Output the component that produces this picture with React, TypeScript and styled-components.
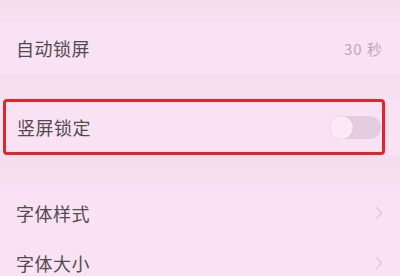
import React from 'react';
import styled, { createGlobalStyle } from 'styled-components';

const GlobalStyle = createGlobalStyle`
  html, body {
    margin: 0;
    padding: 0;
    background: #f9e2f3;
    overflow: hidden;
  }
  body {
    font-family: "Noto Sans CJK SC", "Noto Sans", sans-serif;
  }
`

const Page = styled.div`
  width: 400px;
  height: 276px;
  display: flex;
  flex-direction: column;
  background: #f9e2f3;
  overflow: hidden;
`

const Band = styled.div<{ h: number }>`
  height: ${props => props.h}px;
  flex-shrink: 0;
  background: linear-gradient(180deg, #f4ddec 0%, #f7e0f0 100%);
`

const Row = styled.div<{ h: number }>`
  height: ${props => props.h}px;
  flex-shrink: 0;
  display: flex;
  align-items: center;
  justify-content: space-between;
  padding: 0 17px 0 16px;
  background: #f9e2f3;
`

const Highlight = styled.div`
  height: 56px;
  flex-shrink: 0;
  margin: 0 15px 0 3px;
  box-sizing: border-box;
  border: 3px solid #e4242b;
  border-radius: 4px;
  display: flex;
  align-items: center;
  justify-content: space-between;
  padding: 0 1px 0 11px;
  background: #f9e2f3;
`

const Label = styled.span`
  font-size: 18px;
  color: #524b50;
  letter-spacing: 0.5px;
`

const Value = styled.span`
  font-size: 15px;
  color: #bcaab8;
  letter-spacing: 1px;
`

const Toggle = styled.div`
  width: 51px;
  height: 23px;
  border-radius: 12px;
  background: #e4cde0;
  position: relative;
`

const Knob = styled.div`
  position: absolute;
  left: 0;
  top: 0;
  width: 23px;
  height: 23px;
  border-radius: 50%;
  background: #fbe9f6;
  box-shadow: 0 0 1px rgba(120, 90, 110, 0.35);
`

const Chevron = () => (
  <svg width="8" height="14" viewBox="0 0 8 14">
    <path d="M1.5 1.5 L6.5 7 L1.5 12.5" fill="none" stroke="#e0cbd9" strokeWidth="1.6" strokeLinecap="round" strokeLinejoin="round" />
  </svg>
)

const App = () => (
  <>
    <GlobalStyle />
    <Page>
      <Band h={22} />
      <Row h={52}>
        <Label>自动锁屏</Label>
        <Value>30 秒</Value>
      </Row>
      <Band h={25} />
      <Highlight>
        <Label>竖屏锁定</Label>
        <Toggle>
          <Knob />
        </Toggle>
      </Highlight>
      <Band h={30} />
      <Row h={55}>
        <Label>字体样式</Label>
        <Chevron />
      </Row>
      <Row h={45}>
        <Label>字体大小</Label>
        <Chevron />
      </Row>
    </Page>
  </>
)

export default App;
